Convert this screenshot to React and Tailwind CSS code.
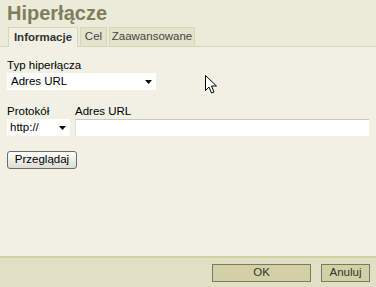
import React from "react";

function Arrow() {
  return (
    <svg width="7" height="4" viewBox="0 0 7 4" className="shrink-0">
      <path d="M0 0h7L3.5 4z" fill="#000" />
    </svg>
  );
}

function Cursor() {
  return (
    <svg
      width="13"
      height="19"
      viewBox="0 0 13 19"
      className="absolute left-[205px] top-[75px]"
    >
      <path
        d="M0.5 0.5v15l3.5-3.5 2.5 6 2.5-1-2.5-6h5z"
        fill="#fff"
        stroke="#000"
        strokeWidth="1"
      />
    </svg>
  );
}

export default function App() {
  return (
    <div
      className="relative w-[376px] h-[287px] flex flex-col bg-[#ecebd9] text-[11.5px] text-black overflow-hidden"
      style={{ fontFamily: '"Liberation Sans", Arial, sans-serif' }}
    >
      <div className="h-[27px] pl-[7px] pt-[1px] text-[20px] font-bold text-[#7f7e5c] leading-[24px]">
        Hiperłącze
      </div>
      <div className="flex items-end gap-[2px] pl-[8px] h-[20px] border-b border-[#d8d7b5]">
        <div className="h-[20px] w-[70px] flex items-center justify-center bg-[#f1f0e4] border border-b-0 border-[#d8d7b5] font-bold text-[#333] -mb-[1px]">
          Informacje
        </div>
        <div className="h-[19px] w-[27px] flex items-center justify-center bg-[#e4e3cb] border border-b-0 border-[#d8d7b5] text-[#444]">
          Cel
        </div>
        <div className="h-[19px] w-[86px] flex items-center justify-center bg-[#e4e3cb] border border-b-0 border-[#d8d7b5] text-[#444]">
          Zaawansowane
        </div>
      </div>
      <div className="flex-1 bg-[#f1f0e4] px-[7px] pt-[12px] flex flex-col">
        <div className="leading-[13px]">Typ hiperłącza</div>
        <div className="mt-[1px] w-[149px] h-[17px] bg-white flex items-center justify-between pl-[4px] pr-[4px]">
          <span>Adres URL</span>
          <Arrow />
        </div>
        <div className="mt-[15px] flex gap-[5px]">
          <div className="flex flex-col">
            <div className="leading-[13px]">Protokół</div>
            <div className="mt-[1px] w-[63px] h-[17px] bg-white flex items-center justify-between pl-[3px] pr-[4px]">
              <span>http://</span>
              <Arrow />
            </div>
          </div>
          <div className="flex-1 flex flex-col">
            <div className="leading-[13px]">Adres URL</div>
            <div className="mt-[1px] h-[17px] bg-white border-t border-[#c8c8c0] border-l border-l-[#e0e0d8]"></div>
          </div>
        </div>
        <div className="mt-[15px]">
          <div className="w-[70px] h-[18px] rounded-[3px] border border-[#6b6b6b] bg-gradient-to-b from-white to-[#dcdcd4] flex items-center justify-center">
            Przeglądaj
          </div>
        </div>
      </div>
      <div className="h-[31px] bg-[#e1e0c5] border-t-2 border-[#cdd3a2] flex items-center justify-end gap-[10px] pr-[6px]">
        <div className="w-[99px] h-[18px] bg-[#d2d1a5] border border-[#7a7a5e] flex items-center justify-center text-[#333]">
          OK
        </div>
        <div className="w-[49px] h-[18px] bg-[#d2d1a5] border border-[#7a7a5e] flex items-center justify-center text-[#333]">
          Anuluj
        </div>
      </div>
      <Cursor />
    </div>
  );
}
